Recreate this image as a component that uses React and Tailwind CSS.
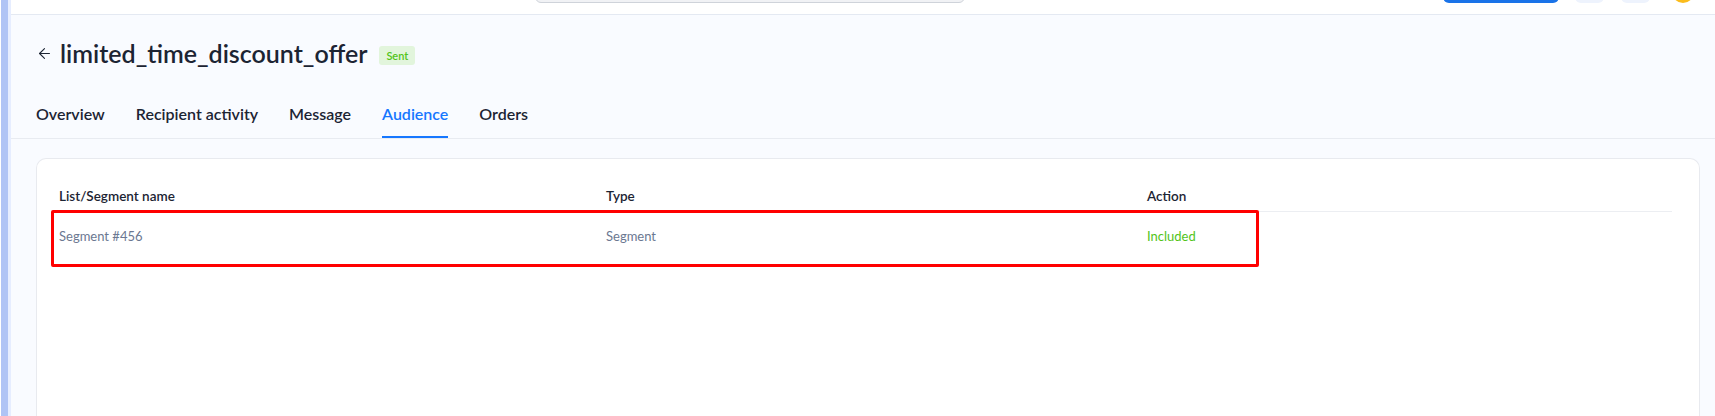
import React from "react";
import { ArrowLeft } from "lucide-react";

const tabs = ["Overview", "Recipient activity", "Message", "Audience", "Orders"];

const rows = [{ name: "Segment #456", type: "Segment", action: "Included" }];

export default function App() {
  return (
    <div className="flex min-h-[416px] w-full bg-[#f9fbff] font-['Lato',sans-serif] text-[#1c2433]">
      {/* left edge strip */}
      <div className="flex w-[11px] shrink-0 bg-white">
        <div className="ml-[1px] w-[7px] bg-[#b0c4f5]" />
        <div className="w-[3px] bg-[#e6edff]" />
      </div>

      <div className="flex min-w-0 flex-1 flex-col">
        {/* top bar, mostly scrolled off */}
        <div className="flex h-[15px] items-end overflow-hidden border-b border-[#e4e9f2] bg-white pb-[11px]">
          <div className="ml-[524px] h-[30px] w-[430px] shrink-0 rounded-[6px] border border-[#cfd3da] bg-[#f1f2f5]" />
          <div className="ml-[478px] h-[30px] w-[116px] shrink-0 rounded-[6px] bg-[#1a73e8]" />
          <div className="ml-[16px] h-[30px] w-[29px] shrink-0 rounded-[6px] bg-[#eef3fd]" />
          <div className="ml-[17px] h-[30px] w-[29px] shrink-0 rounded-[6px] bg-[#eef3fd]" />
          <div className="ml-[22px] h-[30px] w-[22px] shrink-0 rounded-full bg-[#fbbc1c]" />
        </div>

        {/* header */}
        <div className="border-b border-[#e8ebf1] px-[25px]">
          <div className="flex h-[76px] items-center pt-[1px]">
            <ArrowLeft size={17} strokeWidth={1.5} className="text-[#1c2433]" />
            <h1 className="ml-[7px] text-[25px] font-semibold leading-none">
              limited_time_discount_offer
            </h1>
            <span className="ml-[12px] mt-[3px] rounded-[3px] bg-[#e2f5dc] px-[7px] py-[3px] text-[11px] font-semibold leading-[13px] text-[#52c41a]">
              Sent
            </span>
          </div>
          <div className="flex gap-[31px]">
            {tabs.map((t) => (
              <div
                key={t}
                className={
                  t === "Audience"
                    ? "border-b-[2px] border-[#1677ff] pb-[12px] pt-[13px] text-[16px] font-semibold leading-[20px] text-[#1677ff]"
                    : "border-b-[2px] border-transparent pb-[12px] pt-[13px] text-[16px] font-semibold leading-[20px] text-[#1c2433]"
                }
              >
                {t}
              </div>
            ))}
          </div>
        </div>

        {/* content */}
        <div className="flex flex-1 flex-col pl-[25px] pr-[15px] pt-[19px]">
          <div className="relative flex-1 rounded-t-[10px] border border-b-0 border-[#e8eaef] bg-white px-[22px] pt-[27px]">
            <div className="mr-[5px] grid grid-cols-[547px_541px_1fr] border-b border-[#eceef2] pb-[5px] text-[13.5px] font-semibold text-[#1c2433]">
              <div>List/Segment name</div>
              <div>Type</div>
              <div>Action</div>
            </div>
            {rows.map((r) => (
              <div key={r.name} className="grid h-[48px] grid-cols-[547px_541px_1fr] items-center text-[13px]">
                <div className="text-[#6b7891]">{r.name}</div>
                <div className="text-[#6b7891]">{r.type}</div>
                <div className="text-[#52c41a]">{r.action}</div>
              </div>
            ))}
            {/* highlight annotation */}
            <div className="pointer-events-none absolute left-[14px] top-[51px] h-[57px] w-[1208px] rounded-[2px] border-[3px] border-[#ff0000]" />
          </div>
        </div>
      </div>
    </div>
  );
}
